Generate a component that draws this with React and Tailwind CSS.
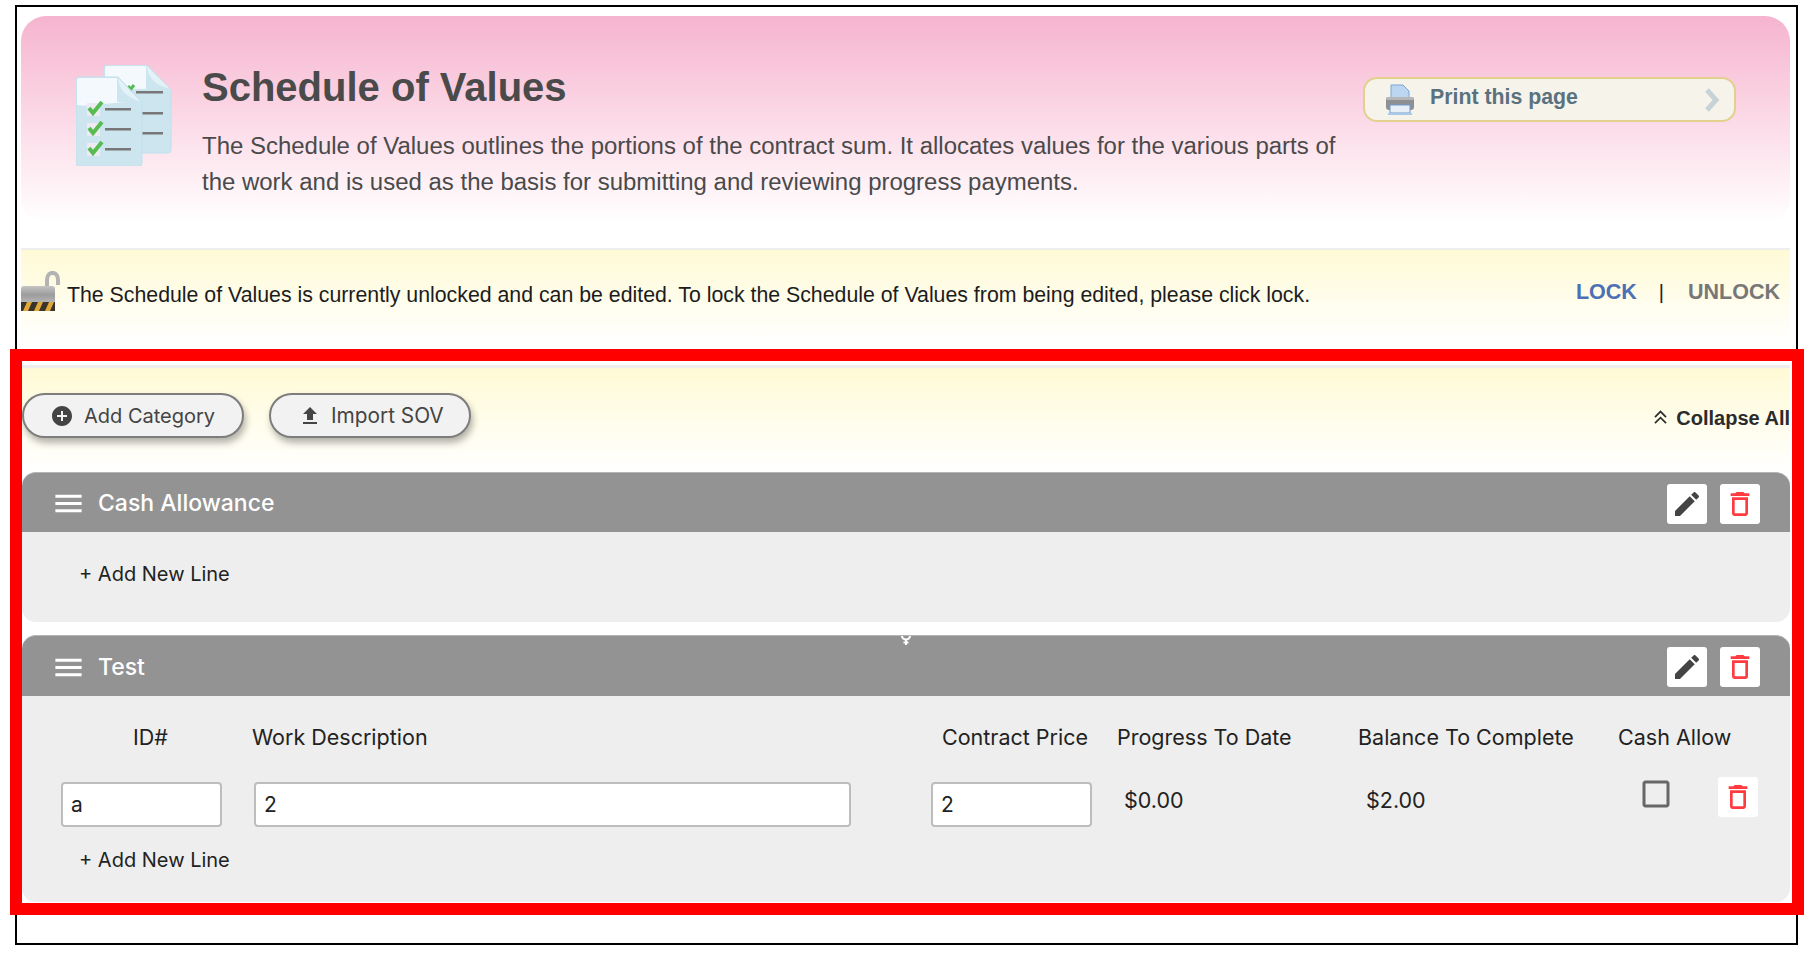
import React from 'react';

const sans = 'font-["Liberation_Sans",Arial,sans-serif]';
const inter = 'font-["Inter",sans-serif]';

const Mui = ({ d, className }) => (
  <svg viewBox="0 0 24 24" fill="currentColor" className={className}>
    <path d={d} />
  </svg>
);

const ICONS = {
  edit: 'M3 17.25V21h3.75L17.81 9.94l-3.75-3.75L3 17.25zM20.71 7.04c.39-.39.39-1.02 0-1.41l-2.34-2.34c-.39-.39-1.02-.39-1.41 0l-1.83 1.83 3.75 3.75 1.83-1.83z',
  trash: 'M6 19c0 1.1.9 2 2 2h8c1.1 0 2-.9 2-2V7H6v12zM8 9h8v10H8V9zm7.5-5l-1-1h-5l-1 1H5v2h14V4z',
  add: 'M12 2C6.48 2 2 6.48 2 12s4.48 10 10 10 10-4.48 10-10S17.52 2 12 2zm5 11h-4v4h-2v-4H7v-2h4V7h2v4h4v2z',
  upload: 'M9 16h6v-6h4l-7-7-7 7h4zm-4 2h14v2H5z',
  menu: 'M3 18h18v-2H3v2zm0-5h18v-2H3v2zm0-7v2h18V6H3z',
  doubleUp: 'M17.59 18 19 16.59l-7-7-7 7L6.41 18 12 12.42z M17.59 11 19 9.59l-7-7-7 7L6.41 11 12 5.42z',
  checkbox: 'M19 5v14H5V5h14m0-2H5c-1.1 0-2 .9-2 2v14c0 1.1.9 2 2 2h14c1.1 0 2-.9 2-2V5c0-1.1-.9-2-2-2z',
};

const DocsIcon = () => (
  <svg viewBox="0 0 96 101" className="w-[96px] h-[101px] shrink-0 mt-[49px]">
    <path d="M31 0h40l24 25v60a3 3 0 0 1-3 3H31a3 3 0 0 1-3-3V3a3 3 0 0 1 3-3z" fill="#cce5ef" stroke="#bfe0ec" strokeWidth="1" />
    <path d="M31 1h39v23h24H60c-10 0-22 2-31 6V3a2 2 0 0 1 2-2z" fill="#f3f9fc" />
    <path d="M71 1c1 12 8 19 23 23z" fill="#e2f2f6" />
    <rect x="60" y="26" width="27" height="2.5" fill="#777" />
    <rect x="60" y="47" width="27" height="2.5" fill="#777" />
    <rect x="60" y="67" width="27" height="2.5" fill="#777" />
    <path d="M52 21l3 3 3-4" fill="none" stroke="#57bd52" strokeWidth="3" />
    <path d="M3 12h39l24 25v61a3 3 0 0 1-3 3H3a3 3 0 0 1-3-3V15a3 3 0 0 1 3-3z" fill="#cde5ef" stroke="#bfe0ec" strokeWidth="1" />
    <path d="M3 13h38v24h24H50C30 38 15 42 1 40V15a2 2 0 0 1 2-2z" fill="#f3f9fc" />
    <path d="M42 13c1 12 8 19 23 24z" fill="#e2f2f6" />
    {[44, 64, 84].map((y) => (
      <g key={y}>
        <rect x="11" y={y - 6} width="13" height="13" fill="#eee9f3" />
        <path d={`M13 ${y - 1}l4 5 9-11`} fill="none" stroke="#57bd52" strokeWidth="4" />
        <rect x="29" y={y - 1} width="26" height="2.5" fill="#777" />
      </g>
    ))}
  </svg>
);

const LockIcon = () => (
  <svg viewBox="0 0 40 42" className="w-[40px] h-[42px] shrink-0 -mt-[5px]">
    <defs>
      <linearGradient id="lockBody" x1="0" y1="0" x2="0" y2="1">
        <stop offset="0" stopColor="#c4c4c4" />
        <stop offset="0.35" stopColor="#9c9c9c" />
        <stop offset="1" stopColor="#d2d2d2" />
      </linearGradient>
    </defs>
    <path d="M26 17V9c0-9.5 11-9.5 11 0v5" fill="none" stroke="#b3b3b3" strokeWidth="4" />
    <rect x="0" y="15" width="34" height="25" rx="3" fill="url(#lockBody)" />
    <rect x="0" y="31" width="34" height="9" fill="#3a342a" />
    <path d="M2 40l4-9h5l-4 9zM13 40l4-9h5l-4 9zM24 40l4-9h5l-4 9z" fill="#e0a93a" />
  </svg>
);

const PrinterIcon = () => (
  <svg viewBox="0 0 30 32" className="w-[30px] h-[32px] shrink-0">
    <path d="M6 1h12l6 6v12H6z" fill="#bcd6f2" stroke="#7ba6d6" />
    <rect x="1" y="13" width="28" height="13" rx="3" fill="#8d8f92" />
    <rect x="1" y="13" width="28" height="3" rx="1.5" fill="#b5b7b9" />
    <rect x="5" y="21" width="20" height="8" fill="#e8eef5" stroke="#6f9ccf" />
    <rect x="3" y="29" width="24" height="2" fill="#a9c9ea" />
  </svg>
);

const PillButton = ({ icon, iconClass, label, className }) => (
  <button className={`h-[45px] flex items-center rounded-full bg-[#f2f2f2] border-2 border-[#7d7d7d] shadow-[2px_5px_7px_rgba(0,0,0,0.3)] text-[#444] ${className}`}>
    <Mui d={icon} className={iconClass} />
    {label}
  </button>
);

const SquareButton = ({ icon, iconClass }) => (
  <button className="w-10 h-10 bg-white rounded-[3px] flex items-center justify-center">
    <Mui d={icon} className={iconClass} />
  </button>
);

const CategoryHeader = ({ title, children, className }) => (
  <div className={`relative bg-[#939393] border-t border-[#b5b5b5] rounded-t-[14px] flex items-center pt-[2px] pl-[29px] pr-[30px] ${className}`}>
    <Mui d={ICONS.menu} className="w-[35px] h-[35px] text-white" />
    <span className="ml-[12px] text-[23px] font-medium text-white">{title}</span>
    <div className="ml-auto flex gap-[13px]">
      <SquareButton icon={ICONS.edit} iconClass="w-8 h-8 text-[#444]" />
      <SquareButton icon={ICONS.trash} iconClass="w-8 h-8 text-[#ff3b40]" />
    </div>
    {children}
  </div>
);

const Field = ({ value, className }) => (
  <input
    readOnly
    value={value}
    className={`h-[45px] bg-white border-2 border-[#bdbdbd] rounded-[4px] pl-[8px] text-[21px] text-[#222] outline-none ${className}`}
  />
);

const App = () => (
  <div className="h-[960px] bg-white pt-[5px] pl-[15px] overflow-hidden">
    <div className="w-[1783px] h-[940px] border-2 border-black pt-[9px] pl-[4px]">
      {/* Page header */}
      <div className={`${sans} w-[1769px] h-[207px] rounded-[25px] bg-gradient-to-b from-[#f5b4cf] to-white flex pl-[55px]`}>
        <DocsIcon />
        <div className="ml-[30px] w-[1150px] shrink-0">
          <h1 className="mt-[46px] text-[40px] leading-[50px] font-bold text-[#4a4a4a]">Schedule of Values</h1>
          <p className="mt-[16px] text-[23.97px] leading-[36px] text-[#4a4a4a]">
            The Schedule of Values outlines the portions of the contract sum. It allocates values for the various parts of the work and is used as the basis for submitting and reviewing progress payments.
          </p>
        </div>
        <button className="ml-[11px] mt-[61px] w-[373px] h-[45px] flex items-center rounded-[14px] bg-[#f6f3ea] border-2 border-[#e3d08f] pl-[20px] pr-[14px] text-[21.3px] font-bold text-[#5a7280]">
          <PrinterIcon />
          <span className="ml-[15px] pb-[4px]">Print this page</span>
          <svg viewBox="0 0 16 24" className="ml-auto w-[16px] h-[24px]">
            <path d="M3 2l9 10-9 10" fill="none" stroke="#c6d2d6" strokeWidth="5" />
          </svg>
        </button>
      </div>

      {/* Lock banner */}
      <div className={`${sans} mt-[25px] w-[1769px] h-[97px] border-t-2 border-[#eeeeee] bg-gradient-to-b from-[#fffad5] to-white flex items-center pb-[7px]`}>
        <LockIcon />
        <span className="ml-[6px] mt-[3px] text-[21.3px] text-[#1c1c1c]">
          The Schedule of Values is currently unlocked and can be edited. To lock the Schedule of Values from being edited, please click lock.
        </span>
        <div className="ml-auto flex items-center pr-[10px] pb-[4px] text-[21.5px] font-bold">
          <span className="text-[#4d6fb5]">LOCK</span>
          <span className="ml-[22px] mr-[24px] font-normal text-[20px] text-[#222]">|</span>
          <span className="text-[#777]">UNLOCK</span>
        </div>
      </div>

      {/* Outlined section */}
      <div className={`${inter} mt-[4px] -ml-[11px] w-[1794px] h-[566px] border-[12px] border-[#ff0000] bg-white`}>
        <div className="h-[107px] mt-[4px] border-t-[3px] border-[#eeeeee] bg-gradient-to-b from-[#fffad5] to-white flex items-start pt-[25px] mr-[2px]">
          <PillButton icon={ICONS.add} iconClass="w-[24px] h-[24px] mr-[10px] text-[#444]" label="Add Category" className="w-[222px] pl-[26px] text-[20px]" />
          <PillButton icon={ICONS.upload} iconClass="w-[24px] h-[24px] mr-[9px] text-[#444]" label="Import SOV" className="ml-[25px] w-[202px] pl-[27px] text-[20.8px]" />
          <div className={`${sans} ml-auto mt-[10px] flex items-center text-[20px] font-bold text-[#2b2b2b]`}>
            <Mui d={ICONS.doubleUp} className="w-[21px] h-[21px] mr-[5px]" />
            Collapse All
          </div>
        </div>

        {/* Cash Allowance */}
        <div className="mr-[2px]">
          <CategoryHeader title="Cash Allowance" className="h-[60px]" />
          <div className="h-[90px] bg-[#eeeeee] rounded-b-[14px] pl-[57px] pt-[29px] text-[20px] leading-[26px] text-[#222]">+ Add New Line</div>
        </div>

        {/* Test */}
        <div className="mt-[13px] mr-[2px]">
          <CategoryHeader title="Test" className="h-[61px]">
            <svg viewBox="0 0 12 9" className="absolute left-[878px] top-0 w-[12px] h-[9px]">
              <path d="M2 0a4 3.4 0 0 0 8 0M6 4v5M3.5 6.5h5" fill="none" stroke="#fff" strokeWidth="2" />
            </svg>
          </CategoryHeader>
          <div className="h-[206px] bg-[#eeeeee] rounded-b-[14px] text-[21.5px] text-[#222]">
            <div className="grid grid-cols-[194px_677px_187px_243px_261px_100px_40px] pl-[39px] pt-[28px]">
              <span className="ml-[72px] leading-[26px]">ID#</span>
              <span className="-ml-[3px] leading-[26px]">Work Description</span>
              <span className="ml-[10px] leading-[26px]">Contract Price</span>
              <span className="-ml-[2px] leading-[26px]">Progress To Date</span>
              <span className="-ml-[4px] leading-[26px]">Balance To Complete</span>
              <span className="-ml-[5px] col-span-2 leading-[26px]">Cash Allow</span>

              <div className="mt-[32px]"><Field value="a" className="w-[161px]" /></div>
              <div className="mt-[32px] -ml-[1px]"><Field value="2" className="w-[597px]" /></div>
              <div className="mt-[32px] -ml-[1px]"><Field value="2" className="w-[161px]" /></div>
              <span className="mt-[32px] ml-[5px] leading-[26px] pt-[5px]">$0.00</span>
              <span className="mt-[32px] ml-[4px] leading-[26px] pt-[5px]">$2.00</span>
              <div className="mt-[26px] ml-[15px]"><Mui d={ICONS.checkbox} className="w-[36px] h-[36px] text-[#666]" /></div>
              <div className="mt-[27px] -ml-[5px]"><SquareButton icon={ICONS.trash} iconClass="w-8 h-8 text-[#ff3b40]" /></div>
            </div>
            <div className="pl-[57px] mt-[20px] text-[20px] leading-[26px]">+ Add New Line</div>
          </div>
        </div>
      </div>
    </div>
  </div>
);

export default App;
